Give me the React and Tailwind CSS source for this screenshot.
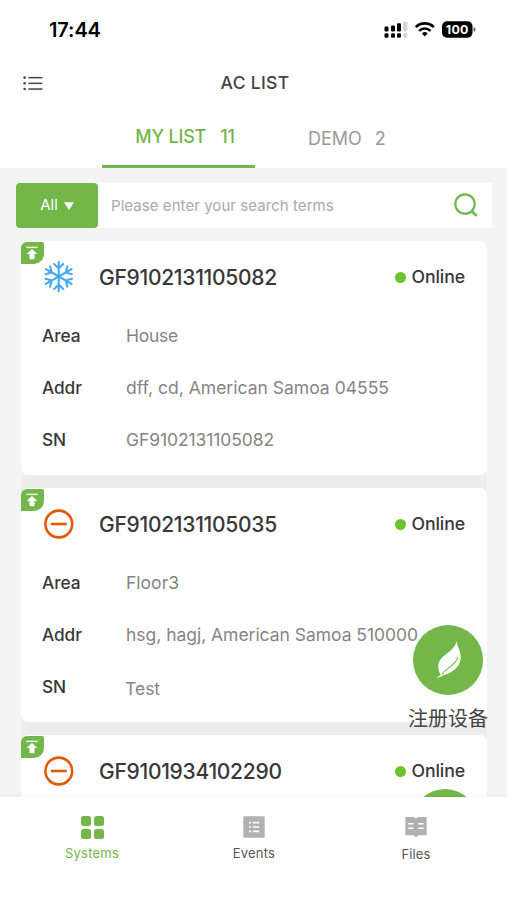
import React from "react";

function MenuIcon() {
  return (
    <svg width="20" height="15" viewBox="0 0 20 15" fill="#444" className="mt-px">
      <circle cx="1.6" cy="1.6" r="1.3" />
      <circle cx="1.6" cy="7.3" r="1.3" />
      <circle cx="1.6" cy="13" r="1.3" />
      <rect x="5.4" y="0.9" width="14" height="1.5" />
      <rect x="5.4" y="6.6" width="14" height="1.5" />
      <rect x="5.4" y="12.3" width="14" height="1.5" />
    </svg>
  );
}

function StatusIcons() {
  return (
    <svg width="93" height="20" viewBox="0 0 93 20" className="-mr-px block">
      <g fill="#000">
        <rect x="0.5" y="6.6" width="4" height="4.8" rx="1.2" />
        <rect x="7" y="5.6" width="4" height="5.8" rx="1.2" />
        <rect x="13" y="3.2" width="4" height="8.2" rx="1.2" />
        <rect x="0.5" y="13.3" width="4" height="4.4" rx="1.3" />
        <rect x="7" y="13.3" width="4" height="4.4" rx="1.3" />
        <rect x="13" y="13.3" width="4" height="4.4" rx="1.3" />
        <g fill="#d2d2d2">
          <rect x="19.3" y="1.4" width="4" height="10" rx="1.2" />
          <rect x="19.3" y="13.3" width="4" height="4.4" rx="1.3" />
        </g>
      </g>
      <g fill="none" stroke="#000" strokeWidth="2.6">
        <path d="M31.8 7.2a12.6 12.6 0 0 1 18 0" />
        <path d="M35.1 10.9a8 8 0 0 1 11.4 0" />
      </g>
      <path d="M40.8 16.4l-2.9-2.9a4.2 4.2 0 0 1 5.8 0z" fill="#000" />
      <rect x="58" y="1.2" width="30.5" height="16.6" rx="5" fill="#000" />
      <path d="M89.6 7v5a2.6 2.6 0 0 0 0-5z" fill="#555" />
      <text x="73.2" y="14" textAnchor="middle" fill="#fff" fontSize="12.4" fontWeight="700" letterSpacing="0.2" fontFamily="Inter, sans-serif">100</text>
    </svg>
  );
}

function PinBadge() {
  return (
    <div className="absolute left-0 top-px flex h-[22px] w-[22.5px] items-center justify-center rounded-tl-[6px] rounded-tr-[2px] rounded-br-[10px] bg-[#73b74b]">
      <svg width="14" height="14" viewBox="0 0 14 14" fill="#fff">
        <rect x="1.3" y="0.6" width="11.4" height="1.5" opacity=".85" />
        <path d="M7 2.9l5.4 5.2H9.5v4.4a.7.7 0 0 1-.7.7H5.2a.7.7 0 0 1-.7-.7V8.1H1.6z" />
      </svg>
    </div>
  );
}

function SnowIcon() {
  return (
    <svg width="32" height="34" viewBox="-16.7 -16.5 32 34" fill="none" stroke="#45a9f5" strokeWidth="2.1" strokeLinecap="round">
      {[0, 60, 120, 180, 240, 300].map((a) => (
        <path key={a} transform={`rotate(${a})`} d="M0 0V-14.8M-4.6 -12.6L0 -8.2L4.6 -12.6" />
      ))}
    </svg>
  );
}

function StopIcon() {
  return (
    <svg width="32" height="34" viewBox="-16.8 -17 32 34" fill="none" stroke="#e35a0a" strokeWidth="2.6">
      <circle r="13.4" />
      <path d="M-8 0H8" />
    </svg>
  );
}

function Row({ label, value, shift }) {
  return (
    <div className="flex h-[52px] items-center text-[17.5px]">
      <span className="w-[84px] text-[17.3px] font-medium tracking-[-0.1px] text-[#383838]">{label}</span>
      <span className={"whitespace-nowrap text-[#858585] " + (shift || "tracking-[0.02px]")}>{value}</span>
    </div>
  );
}

function Card({ icon, title, rows }) {
  return (
    <section className="relative h-[233.5px] shrink-0 rounded-[7px] bg-white pl-[21px]">
      <PinBadge />
      <div className="flex h-[69px] items-center pr-[22px] pt-[4px]">
        <div className="-mt-px">{icon}</div>
        <h2 className="ml-[25px] whitespace-nowrap text-[21px] font-medium tracking-[-0.28px] text-[#383838]">{title}</h2>
        <span className="ml-auto flex items-center gap-[6px] text-[17.7px] font-medium text-[#383838]">
          <i className="h-[11px] w-[11px] rounded-full bg-[#6fc32b]" />
          <span className="tracking-[-0.12px]">Online</span>
        </span>
      </div>
      {rows.map((r) => (
        <Row key={r.label} {...r} />
      ))}
    </section>
  );
}

function LeafButton() {
  return (
    <div className="absolute left-[408px] top-[457px] flex w-[80px] flex-col items-center">
      <div className="h-[70px] w-[70px] rounded-full bg-[#73b74b]">
        <svg width="70" height="70" viewBox="0 0 70 70">
          <path d="M43.6 16.3C44.4 22 48.3 27 47.7 33.5C47 41.5 40.5 47.6 30.6 50C28.4 51.6 25.4 53 22 53.1C25 52 26.8 51 27.5 49.4C24.6 43.5 24.3 38 28.3 33.4C33 28 41.3 25.4 43.6 16.3Z" fill="#fff" />
          <path d="M28.8 49.6C32.5 43.2 41.5 41.2 45.1 32.2" fill="none" stroke="#73b74b" strokeWidth="1.1" />
        </svg>
      </div>
      <span className="mt-[9px] whitespace-nowrap font-['Noto_Sans_CJK_SC',sans-serif] text-[20px] leading-[28px] text-[#444]">注册设备</span>
    </div>
  );
}

function NavItem({ icon, label, className }) {
  return (
    <div className={"flex w-[162px] flex-col items-center text-[13px] " + className}>
      <div className="flex h-[24px] items-center">{icon}</div>
      <span className="mt-[4px] leading-[20px]">{label}</span>
    </div>
  );
}

const cards = [
  {
    icon: <SnowIcon />,
    title: "GF9102131105082",
    rows: [
      { label: "Area", value: "House", shift: "tracking-[-0.25px]" },
      { label: "Addr", value: "dff, cd, American Samoa 04555", shift: "tracking-[0.01px]" },
      { label: "SN", value: "GF9102131105082", shift: "tracking-[-0.1px]" },
    ],
  },
  {
    icon: <StopIcon />,
    title: "GF9102131105035",
    rows: [
      { label: "Area", value: "Floor3" },
      { label: "Addr", value: "hsg, hagj, American Samoa 510000", shift: "tracking-[-0.03px]" },
      { label: "SN", value: "Test", shift: "-ml-px pt-[4px]" },
    ],
  },
  { icon: <StopIcon />, title: "GF9101934102290", rows: [] },
];

export default function App() {
  return (
    <div className="flex h-[900px] w-[507px] flex-col overflow-hidden bg-white font-['Inter',sans-serif]">
      <div className="flex h-[60px] items-center justify-between pl-[49px] pr-[31px]">
        <span className="text-[20px] font-semibold tracking-[-0.1px] text-black">17:44</span>
        <StatusIcons />
      </div>
      <header className="grid h-[45px] grid-cols-3 items-center pl-[23px] pr-[20px]">
        <MenuIcon />
        <h1 className="pt-px text-center text-[17.5px] font-medium tracking-[0.3px] text-[#444]">AC LIST</h1>
      </header>
      <div className="flex h-[63px] pl-[102px]">
        <div className="flex w-[153px] items-center justify-center gap-[14px] border-b-[3px] border-[#73b74b] pl-[13px] pt-[3px] text-[18px] font-medium tracking-[-0.2px] text-[#73b74b]">
          <span>MY LIST</span>
          <span>11</span>
        </div>
        <div className="ml-[53px] flex items-center gap-[13px] pt-[3px] text-[18px] text-[#999]">
          <span>DEMO</span>
          <span>2</span>
        </div>
      </div>

      <main className="relative h-[629px] overflow-hidden bg-[#f4f4f5]">
        <div className="ml-[16px] mt-[15px] flex h-[45px] w-[476px] items-center bg-white">
          <div className="flex h-[45px] w-[82px] items-center justify-center gap-[6px] rounded-[4px] bg-[#73b74b] text-[15px] text-white">
            All
            <svg width="10" height="8" viewBox="0 0 10 8" fill="#fff"><path d="M0 .3h10L5 8z" /></svg>
          </div>
          <span className="ml-[13px] pt-px text-[15px] tracking-[0.06px] text-[#aaa]">Please enter your search terms</span>
          <svg width="24" height="24" viewBox="0 0 24 24" fill="none" stroke="#73b74b" strokeWidth="2.2" className="mb-px ml-auto mr-[14px]">
            <circle cx="11" cy="11" r="9.7" />
            <path d="M17.8 18.2L22.6 22.9" strokeWidth="2.7" />
          </svg>
        </div>
        <div className="ml-[21px] mt-[13px] w-[466px]">
          <div className="flex flex-col gap-[13.5px] rounded-[7px] bg-[#ededee]">
            {cards.map((c) => (
              <Card key={c.title} {...c} />
            ))}
          </div>
        </div>
        <LeafButton />
        <div className="absolute left-[412px] top-[621px] h-[66px] w-[66px] rounded-full bg-[#73b74b]" />
      </main>

      <nav className="relative flex h-[103px] bg-white pl-[11px] pt-[18px] shadow-[0_-2px_5px_rgba(0,0,0,0.035)]">
        <NavItem
          label="Systems"
          className="tracking-[0.25px] text-[#73b74b]"
          icon={
            <div className="grid grid-cols-2 gap-[3px]">
              <i className="h-[10px] w-[10px] rounded-[2.5px] bg-[#73b74b]" />
              <i className="h-[10px] w-[10px] rounded-[2.5px] bg-[#73b74b]" />
              <i className="h-[10px] w-[10px] rounded-[2.5px] bg-[#73b74b]" />
              <i className="h-[10px] w-[10px] rounded-[2.5px] bg-[#73b74b]" />
            </div>
          }
        />
        <NavItem
          label="Events"
          className="tracking-[0.2px] text-[#555]"
          icon={
            <svg width="22" height="22" viewBox="0 0 22 22">
              <rect x="0.3" y="0.3" width="21.4" height="21.4" rx="1" fill="#b1b1b1" />
              <path d="M6 6.6h2M6 11h2M6 15.4h2M9.8 6.6H16.2M9.8 11H16.2M9.8 15.4H16.2" stroke="#fff" strokeWidth="1.6" />
            </svg>
          }
        />
        <NavItem
          label="Files"
          className="pt-px tracking-[0.15px] text-[#555]"
          icon={
            <svg width="22" height="22" viewBox="0 0 22 22" className="-mt-[2px]">
              <path d="M0.3 1H8.8L11 2.6L13.2 1H21.7V19.2H13.5L11 21.2L8.5 19.2H0.3Z" fill="#b1b1b1" />
              <path d="M3.2 7.8H8.4M3.2 12.2H8.4M13.2 7.8H18.6M13.2 12.2H18.6" stroke="#fff" strokeWidth="1.5" />
            </svg>
          }
        />
      </nav>
    </div>
  );
}
